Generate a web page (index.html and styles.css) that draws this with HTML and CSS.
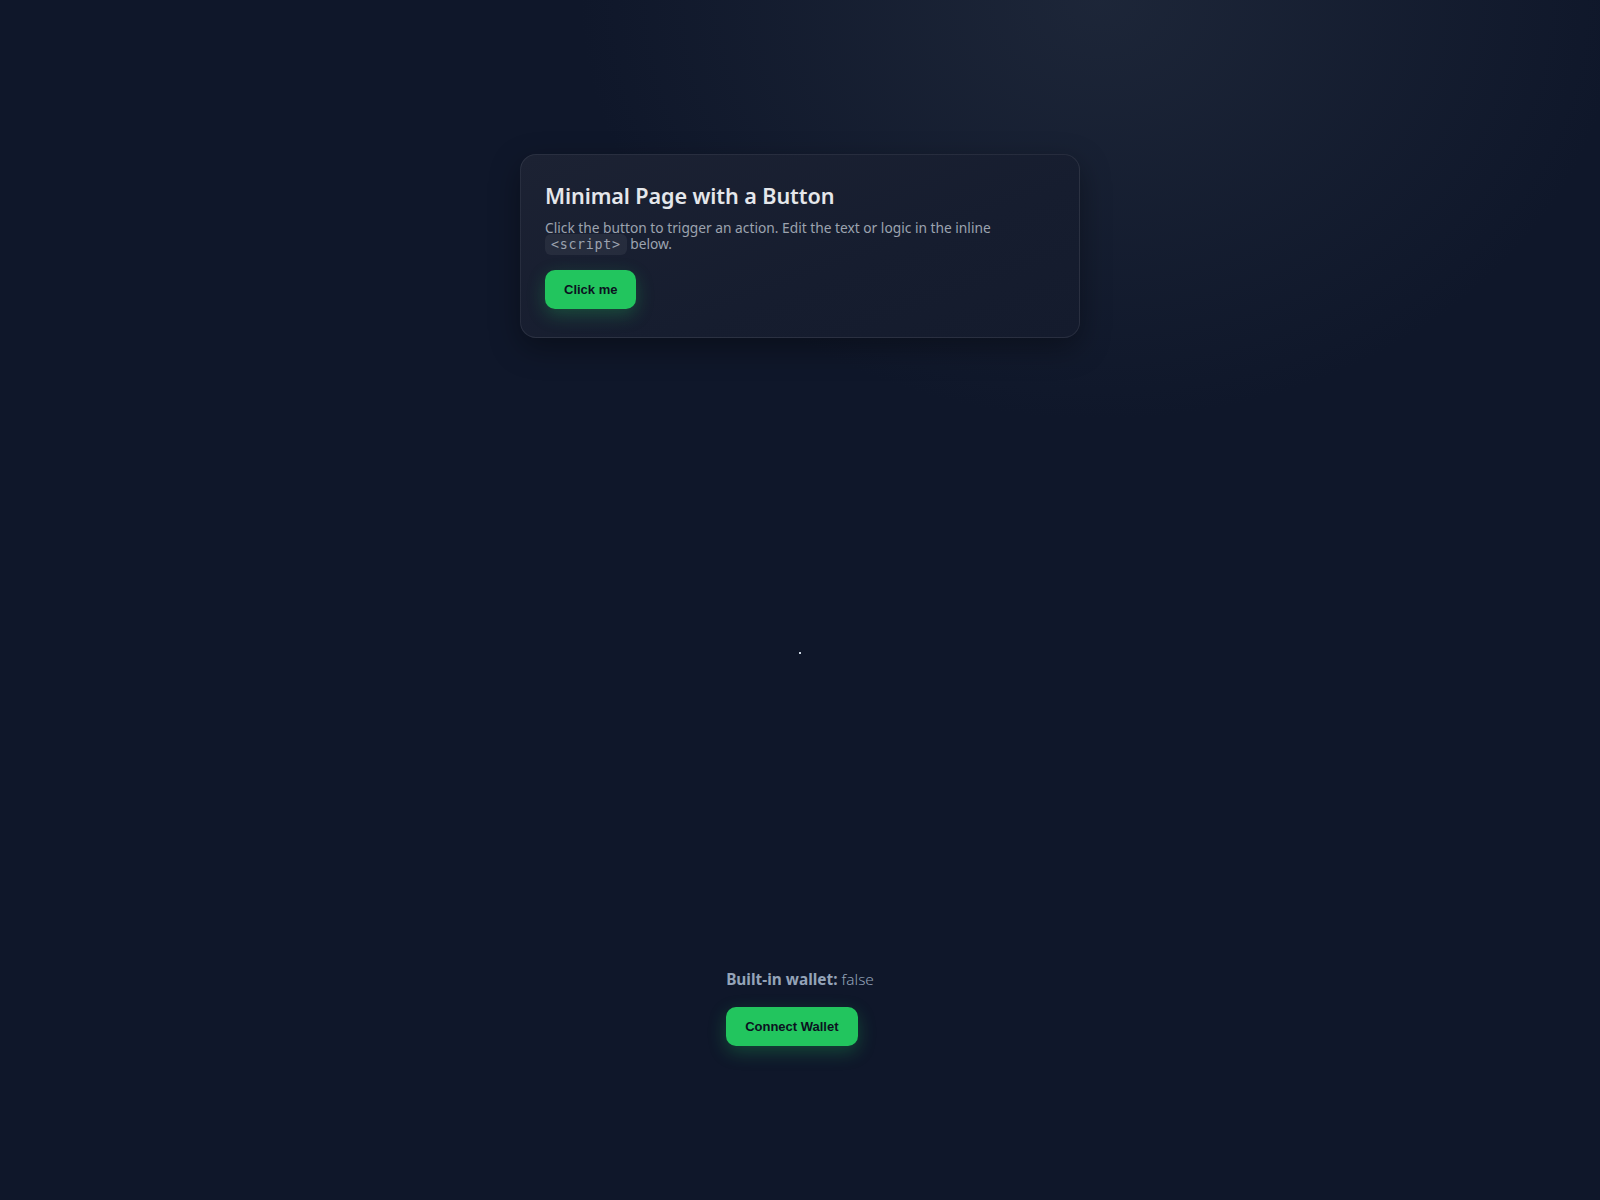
FILE: index.html
```html
<!DOCTYPE html>
<html lang="en">
<head>
<meta charset="utf-8">
<title>Minimal Page with a Button</title>
<link rel="stylesheet" href="styles.css">
</head>
<body>
<div class="page">
  <div class="card">
    <h1 class="title">Minimal Page with a Button</h1>
    <p class="desc">Click the button to trigger an action. Edit the text or logic in the inline <code class="chip">&lt;script&gt;</code> below.</p>
    <button class="btn">Click me</button>
  </div>
  <div class="dot"></div>
  <div class="wallet">
    <div class="wallet-line"><strong>Built-in wallet:</strong> <span class="val">false</span></div>
    <button class="btn btn-wallet">Connect Wallet</button>
  </div>
</div>
</body>
</html>
```
FILE: styles.css
```css
html, body {
  margin: 0;
  padding: 0;
}
body {
  min-height: 100vh;
  background-color: #0f172a;
  background-image: radial-gradient(ellipse 520px 420px at 1100px 0px, rgba(40, 50, 68, 0.55), rgba(40, 50, 68, 0) 100%);
  font-family: "Noto Sans", "Open Sans", sans-serif;
  color: #e5e7eb;
}
.page {
  display: flex;
  flex-direction: column;
  align-items: center;
  padding-top: 154px;
}
.card {
  box-sizing: border-box;
  width: 560px;
  padding: 28px 24px 28px;
  border: 1px solid rgba(255, 255, 255, 0.08);
  border-radius: 16px;
  background: linear-gradient(160deg, #1c2233 0%, #161d2f 60%, #141b2d 100%);
  box-shadow: 0 10px 30px rgba(0, 0, 0, 0.35);
}
.title {
  margin: 0 0 11px;
  font-size: 21.6px;
  line-height: 26px;
  font-weight: 600;
  color: #e5e7eb;
  letter-spacing: -0.1px;
}
.desc {
  margin: 0 0 17px;
  font-size: 13.75px;
  line-height: 16px;
  color: #9ca3af;
  font-weight: 400;
}
.chip {
  font-family: "DejaVu Sans Mono", "Liberation Mono", monospace;
  font-size: 13.3px;
  letter-spacing: 0.7px;
  padding: 3px 6px;
  border-radius: 6px;
  background: rgba(255, 255, 255, 0.06);
  color: #9ca3af;
}
.btn {
  display: block;
  border: 0;
  border-radius: 10px;
  background: #22c55e;
  color: #0b1220;
  font-family: "Liberation Sans", Arial, sans-serif;
  font-weight: 700;
  font-size: 13px;
  line-height: 15px;
  padding: 12px 19px;
  box-shadow: 0 6px 18px rgba(34, 197, 94, 0.28);
  cursor: pointer;
}
.dot {
  width: 2px;
  height: 2px;
  margin-top: 314px;
  background: #cbd5e1;
}
.wallet {
  margin-top: 317px;
  display: flex;
  flex-direction: column;
  align-items: flex-start;
}
.wallet-line {
  font-size: 15.4px;
  line-height: 18px;
  color: #94a3b8;
}
.wallet-line strong {
  font-weight: 700;
}
.val {
  font-weight: 300;
}
.btn-wallet {
  margin-top: 18px;
}
```
